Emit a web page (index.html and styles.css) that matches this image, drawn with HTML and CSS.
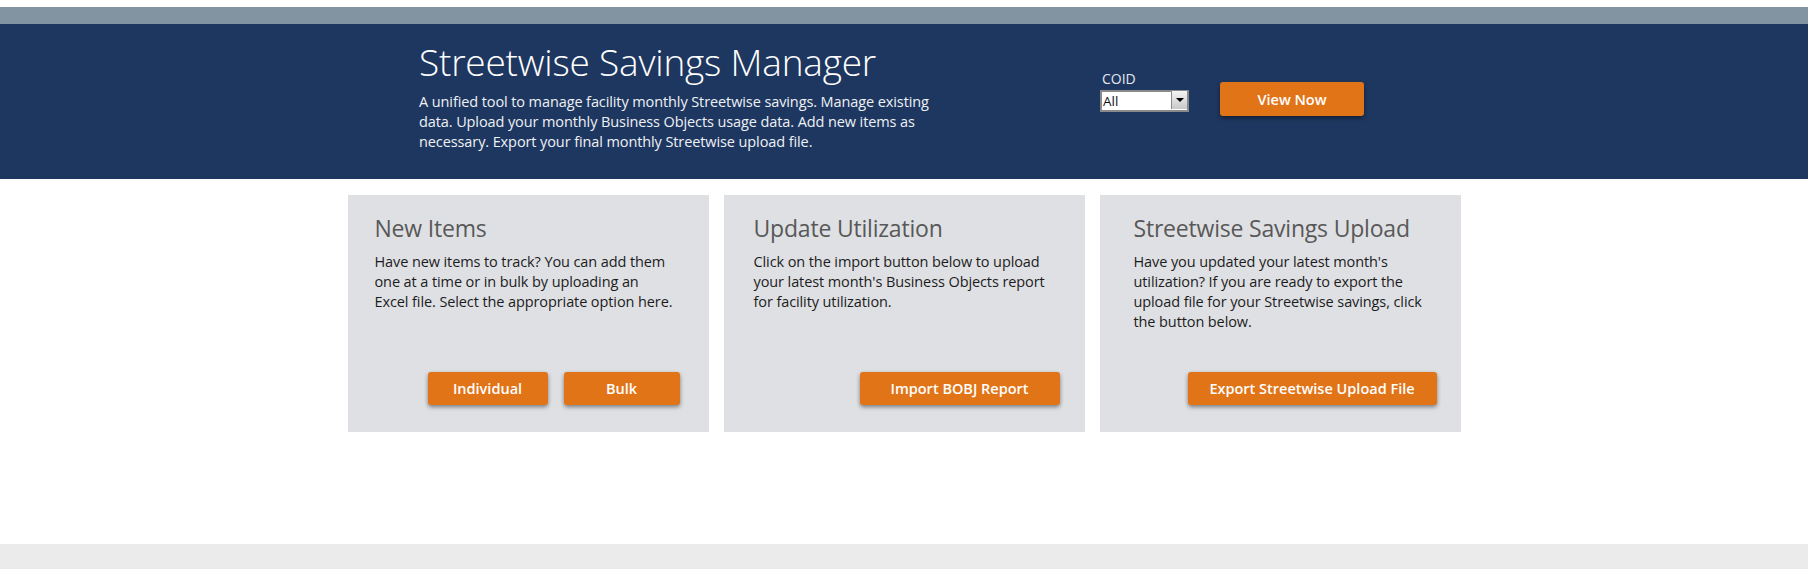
FILE: index.html
```html
<!DOCTYPE html>
<html lang="en">
<head>
<meta charset="utf-8">
<title>Streetwise Savings Manager</title>
<link rel="stylesheet" href="styles.css">
</head>
<body>
<div class="topbar"></div>
<header class="hero">
  <div class="hero-inner">
    <div class="hero-text">
      <h1 class="hero-title">Streetwise Savings Manager</h1>
      <p class="hero-desc">A unified tool to manage facility monthly Streetwise savings. Manage existing data. Upload your monthly Business Objects usage data. Add new items as necessary. Export your final monthly Streetwise upload file.</p>
    </div>
    <div class="hero-controls">
      <div class="field">
        <label class="field-label" for="coid">COID</label>
        <div class="select-wrap">
          <select id="coid" class="select"><option>All</option></select>
          <span class="select-btn"><span class="select-arrow"></span></span>
        </div>
      </div>
      <button class="btn btn-view">View Now</button>
    </div>
  </div>
</header>
<main class="main">
  <div class="cards">
    <section class="card card-a">
      <h2 class="card-title">New Items</h2>
      <p class="card-text">Have new items to track? You can add them one at a time or in bulk by uploading an<br>Excel file. Select the appropriate option here.</p>
      <div class="card-actions card-actions-a">
        <button class="btn btn-individual">Individual</button>
        <button class="btn btn-bulk">Bulk</button>
      </div>
    </section>
    <section class="card card-b">
      <h2 class="card-title">Update Utilization</h2>
      <p class="card-text">Click on the import button below to upload your latest month's Business Objects report for facility utilization.</p>
      <div class="card-actions card-actions-b">
        <button class="btn btn-import">Import BOBJ Report</button>
      </div>
    </section>
    <section class="card card-c">
      <h2 class="card-title">Streetwise Savings Upload</h2>
      <p class="card-text">Have you updated your latest month's utilization? If you are ready to export the upload file for your Streetwise savings, click the button below.</p>
      <div class="card-actions card-actions-c">
        <button class="btn btn-export">Export Streetwise Upload File</button>
      </div>
    </section>
  </div>
</main>
<footer class="footer"></footer>
</body>
</html>
```
FILE: styles.css
```css
* { box-sizing: border-box; }
html, body { margin: 0; padding: 0; }
body {
  background: #ffffff;
  font-family: "Open Sans", "Noto Sans", sans-serif;
  padding-top: 7px;
}
.topbar { height: 17px; background: #8294a2; }
.hero { background: #1e3760; height: 155px; }
.hero-inner {
  display: flex;
  padding-left: 419px;
}
.hero-text { width: 535px; padding-top: 15px; }
.hero-title {
  margin: 0;
  font-weight: 300;
  font-size: 37px;
  line-height: 45px;
  color: #ffffff;
  letter-spacing: -0.2px;
}
.hero-desc {
  margin: 8px 0 0;
  font-size: 14.5px;
  line-height: 20px;
  color: #eef1f5;
  letter-spacing: -0.1px;
}
.hero-controls {
  display: flex;
  align-items: flex-start;
  margin-left: 146px;
  padding-top: 45px;
  gap: 31px;
}
.field { display: flex; flex-direction: column; }
.field-label {
  font-size: 14px;
  line-height: 19px;
  color: #e3e8ef;
  padding-left: 2px;
}
.select-wrap { position: relative; width: 89px; height: 22px; margin-top: 1px; }
.select {
  appearance: none;
  -webkit-appearance: none;
  width: 89px;
  height: 22px;
  border: 2px solid #8a8a8a;
  border-radius: 0;
  background: #ffffff;
  font-family: "Open Sans", sans-serif;
  font-size: 13.5px;
  color: #111;
  padding: 0 0 0 1px;
  margin: 0;
}
.select-btn {
  position: absolute;
  top: 2px;
  right: 2px;
  width: 16px;
  height: 18px;
  background: linear-gradient(#f4f4f4, #c9c9c9);
  border-left: 1px solid #8a8a8a;
  display: flex;
  align-items: center;
  justify-content: center;
}
.select-arrow {
  width: 0; height: 0;
  border-left: 4px solid transparent;
  border-right: 4px solid transparent;
  border-top: 4px solid #000;
}
.btn {
  font-family: "Open Sans", sans-serif;
  font-weight: 600;
  font-size: 14.5px;
  color: #ffffff;
  background: #e27418;
  border: 0;
  border-radius: 3px;
  height: 33px;
  padding: 0;
  box-shadow: 0 2px 4px rgba(0, 0, 0, 0.45);
  cursor: pointer;
}
.btn-view { width: 144px; height: 34px; margin-top: 13px; }
.btn-individual { width: 120px; }
.btn-bulk { width: 116px; }
.btn-import { width: 200px; }
.btn-export { width: 249px; }
.main { height: 365px; padding-top: 16px; }
.cards {
  display: grid;
  grid-template-columns: repeat(3, 361px);
  gap: 15px;
  justify-content: center;
}
.card {
  background: #dfe0e4;
  height: 237px;
  display: flex;
  flex-direction: column;
  padding-top: 19px;
  padding-bottom: 27px;
}
.card-a { padding-left: 27px; padding-right: 27px; }
.card-b { padding-left: 30px; padding-right: 24px; }
.card-c { padding-left: 34px; padding-right: 20px; }
.card-title {
  margin: 0;
  font-weight: 400;
  font-size: 23px;
  line-height: 29px;
  color: #585858;
  letter-spacing: -0.2px;
}
.card-text {
  margin: 9px 0 0;
  font-size: 14.5px;
  line-height: 20px;
  color: #1c1c1c;
  letter-spacing: -0.1px;
}
.card-actions {
  margin-top: auto;
  display: flex;
  justify-content: flex-end;
  gap: 16px;
}
.card-actions-a { margin-right: 2px; }
.card-actions-b { margin-right: 1px; }
.card-actions-c { margin-right: 4px; }
.footer { height: 25px; background: #ebebeb; }
```
